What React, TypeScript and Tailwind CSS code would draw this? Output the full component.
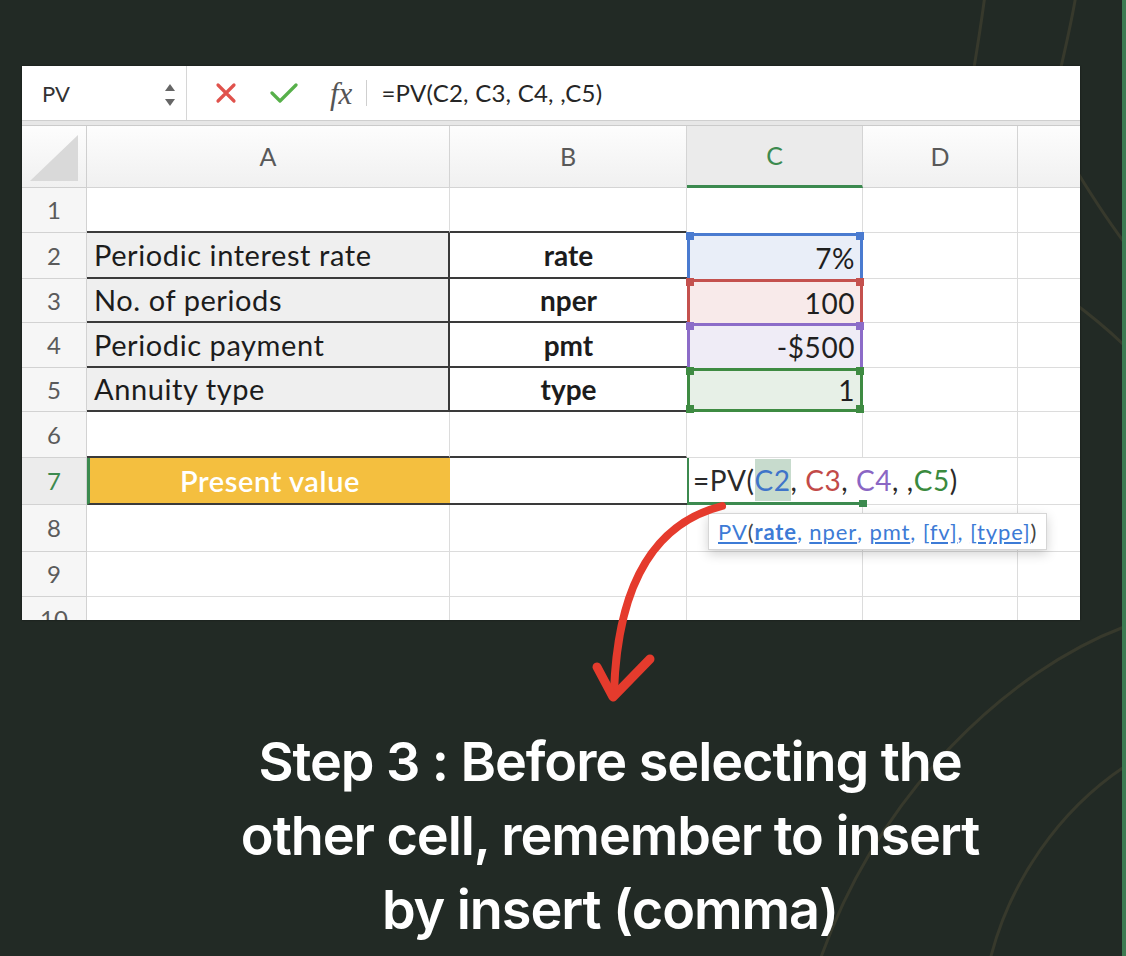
import React from "react";

const GRID = "border-r border-b border-[#dcdcdc]";

function RowHead({ n, active }: { n: string; active?: boolean }) {
  return (
    <div
      className={`w-[65px] shrink-0 h-full flex items-center justify-center text-[24px] border-r border-b border-[#d2d2d2] ${
        active ? "bg-[#ececec] text-[#3c8a4f]" : "bg-[#f6f6f6] text-[#5b5b5b]"
      }`}
    >
      {n}
    </div>
  );
}

function RefCell({
  value,
  cls,
  sq,
  last,
}: {
  value: string;
  cls: string;
  sq: string;
  last?: boolean;
}) {
  return (
    <div
      className={`relative w-[176px] shrink-0 h-full flex items-center justify-end pr-[5px] text-[28px] tracking-[0.02em] text-[#1f1f1f] border-x-[3px] border-t-[3px] ${
        last ? "border-b-[3px]" : ""
      } ${cls}`}
    >
      <span>{value}</span>
      <span className={`absolute -left-[4px] -top-[4px] w-[8px] h-[8px] ${sq}`} />
      <span className={`absolute -right-[4px] -top-[4px] w-[8px] h-[8px] ${sq}`} />
      {last && (
        <>
          <span className={`absolute -left-[4px] -bottom-[4px] w-[8px] h-[8px] ${sq}`} />
          <span className={`absolute -right-[4px] -bottom-[4px] w-[8px] h-[8px] ${sq}`} />
        </>
      )}
    </div>
  );
}

function TailCells() {
  return (
    <>
      <div className={`w-[155px] shrink-0 h-full ${GRID}`} />
      <div className="w-[62px] shrink-0 h-full border-b border-[#dcdcdc]" />
    </>
  );
}

function PlainRow({ n, h }: { n: string; h: string }) {
  return (
    <div className={`flex shrink-0 ${h}`}>
      <RowHead n={n} />
      <div className={`w-[363px] shrink-0 h-full ${GRID}`} />
      <div className={`w-[237px] shrink-0 h-full ${GRID}`} />
      <div className={`w-[176px] shrink-0 h-full ${GRID}`} />
      <TailCells />
    </div>
  );
}

function DataRow({
  n,
  h,
  label,
  name,
  value,
  cls,
  sq,
  last,
}: {
  n: string;
  h: string;
  label: string;
  name: string;
  value: string;
  cls: string;
  sq: string;
  last?: boolean;
}) {
  return (
    <div className={`flex shrink-0 ${h}`}>
      <RowHead n={n} />
      <div className="w-[363px] shrink-0 h-full bg-[#efefef] border-b-2 border-b-[#3a3a3a] border-r-2 border-r-[#3a3a3a] flex items-center pl-[7px] text-[29px] tracking-[0.02em] text-[#1c1c1c]">
        {label}
      </div>
      <div className="w-[237px] shrink-0 h-full bg-white border-b-2 border-b-[#3a3a3a] flex items-center justify-center text-[28px] font-bold text-[#1c1c1c]">
        {name}
      </div>
      <RefCell value={value} cls={cls} sq={sq} last={last} />
      <TailCells />
    </div>
  );
}

function Sheet() {
  return (
    <div className="relative w-[1058px] h-[554px] bg-white overflow-hidden flex flex-col shadow-[0_0_2px_rgba(0,0,0,0.4)]">
      {/* formula bar */}
      <div className="h-[55px] shrink-0 flex items-center border-b border-[#cfcfcf] bg-white">
        <div className="relative w-[165px] h-full flex items-center pl-[20px] border-r border-[#d6d6d6] text-[22px] text-[#333]">
          PV
          <svg className="absolute right-[10px] top-[16px]" width="12" height="26" viewBox="0 0 12 26">
            <path d="M6 2 L11 9 L1 9 Z" fill="#666" />
            <path d="M6 24 L11 17 L1 17 Z" fill="#666" />
          </svg>
        </div>
        <svg className="ml-[28px]" width="22" height="22" viewBox="0 0 22 22">
          <path d="M3 3 L19 19 M19 3 L3 19" stroke="#e0524c" strokeWidth="3.2" strokeLinecap="round" />
        </svg>
        <svg className="ml-[33px]" width="28" height="22" viewBox="0 0 28 22">
          <path d="M2 11 L10 19 L26 3" stroke="#57b04a" strokeWidth="3.2" strokeLinecap="round" strokeLinejoin="round" fill="none" />
        </svg>
        <span className="ml-[32px] font-[family-name:'Liberation_Serif',serif] italic text-[31px] text-[#555] leading-none">
          fx
        </span>
        <div className="ml-[14px] w-px h-[26px] bg-[#cfcfcf]" />
        <span className="ml-[14px] text-[24px] text-[#262626] tracking-[0.01em]">=PV(C2, C3, C4, ,C5)</span>
      </div>
      <div className="h-[5px] shrink-0 bg-[#e7e7e7] border-b border-[#cbcbcb]" />
      {/* header */}
      <div className="h-[62px] shrink-0 flex bg-linear-to-b from-[#fdfdfd] to-[#f0f0f0] text-[25px] text-[#595959]">
        <div className="w-[65px] shrink-0 h-full border-r border-b border-[#cfcfcf] flex items-end justify-end pr-[6px] pb-[4px]">
          <svg width="52" height="50" viewBox="0 0 52 50">
            <path d="M2 48 L50 48 L50 2 Z" fill="#d9d9d9" />
          </svg>
        </div>
        <div className="w-[363px] shrink-0 h-full flex items-center justify-center border-r border-b border-[#d4d4d4]">A</div>
        <div className="w-[237px] shrink-0 h-full flex items-center justify-center border-r border-b border-[#d4d4d4]">B</div>
        <div className="w-[176px] shrink-0 h-full flex items-center justify-center bg-[#ebebeb] text-[#3c8a4f] border-r border-[#d4d4d4] border-b-[3px] border-b-[#3c8a4f]">
          C
        </div>
        <div className="w-[155px] shrink-0 h-full flex items-center justify-center border-r border-b border-[#d4d4d4]">D</div>
        <div className="w-[62px] shrink-0 h-full border-b border-[#d4d4d4]" />
      </div>
      {/* row 1 */}
      <div className="flex shrink-0 h-[45px]">
        <RowHead n="1" />
        <div className="w-[363px] shrink-0 h-full border-r border-[#dcdcdc] border-b-2 border-b-[#3a3a3a]" />
        <div className="w-[237px] shrink-0 h-full border-r border-[#dcdcdc] border-b-2 border-b-[#3a3a3a]" />
        <div className="w-[176px] shrink-0 h-full border-r border-[#dcdcdc]" />
        <TailCells />
      </div>
      <DataRow n="2" h="h-[46px]" label="Periodic interest rate" name="rate" value="7%" cls="border-[#4a7bd0] bg-[#e9eef8]" sq="bg-[#4a7bd0]" />
      <DataRow n="3" h="h-[44px]" label="No. of periods" name="nper" value="100" cls="border-[#c4514e] bg-[#f8eaea]" sq="bg-[#c4514e]" />
      <DataRow n="4" h="h-[45px]" label="Periodic payment" name="pmt" value="-$500" cls="border-[#8c6cc8] bg-[#efecf6]" sq="bg-[#8c6cc8]" />
      <DataRow n="5" h="h-[44px]" label="Annuity type" name="type" value="1" cls="border-[#3e8b42] bg-[#e7f0e7]" sq="bg-[#3e8b42]" last />
      {/* row 6 */}
      <div className="flex shrink-0 h-[46px]">
        <RowHead n="6" />
        <div className="w-[363px] shrink-0 h-full border-r border-[#dcdcdc] border-b-2 border-b-[#3a3a3a]" />
        <div className="w-[237px] shrink-0 h-full border-r border-[#dcdcdc] border-b-2 border-b-[#3a3a3a]" />
        <div className={`w-[176px] shrink-0 h-full ${GRID}`} />
        <TailCells />
      </div>
      {/* row 7 */}
      <div className="flex shrink-0 h-[47px]">
        <RowHead n="7" active />
        <div className="w-[363px] shrink-0 h-full bg-[#f4bf3f] border-l-[3px] border-l-[#3c8a4f] border-b-2 border-b-[#3a3a3a] flex items-center justify-center text-[29px] tracking-[0.02em] font-semibold text-white">
          Present value
        </div>
        <div className="w-[237px] shrink-0 h-full bg-white border-b-2 border-b-[#3a3a3a]" />
        <div className="relative z-10 w-[176px] shrink-0 h-full border-l-2 border-l-[#3c8a4f] border-b-[3px] border-b-[#3c8a4f] flex items-center pl-[4px] whitespace-nowrap text-[28px] text-[#2a2a2a] tracking-[0.02em]">
          <span>=PV(</span>
          <span className="bg-[#c7dbcd] text-[#3f74c9] h-[42px] flex items-center">C2</span>
          <span>,&nbsp;</span>
          <span className="text-[#c24a48]">C3</span>
          <span>,&nbsp;</span>
          <span className="text-[#8a66c4]">C4</span>
          <span>, ,</span>
          <span className="text-[#3a8a3e]">C5</span>
          <span>)</span>
          <span className="absolute -right-[4px] -bottom-[5px] w-[8px] h-[7px] bg-[#3c8a4f]" />
        </div>
        <TailCells />
      </div>
      <PlainRow n="8" h="h-[47px]" />
      <PlainRow n="9" h="h-[45px]" />
      <PlainRow n="10" h="h-[45px]" />
      {/* tooltip */}
      <div className="absolute z-20 left-[686px] top-[447px] h-[37px] px-[9px] flex items-center bg-white border border-[#d6d6d6] shadow-[0_4px_12px_rgba(0,0,0,0.18)] text-[22px] tracking-[0.04em] text-[#444] whitespace-nowrap">
        <span className="text-[#3d7bd6] underline">PV</span>
        <span>(</span>
        <span className="text-[#3d7bd6] underline font-bold">rate</span>
        <span className="text-[#3d7bd6]">,&nbsp;</span>
        <span className="text-[#3d7bd6] underline">nper</span>
        <span className="text-[#3d7bd6]">,&nbsp;</span>
        <span className="text-[#3d7bd6] underline">pmt</span>
        <span className="text-[#3d7bd6]">,&nbsp;</span>
        <span className="text-[#3d7bd6] underline">[fv]</span>
        <span className="text-[#3d7bd6]">,&nbsp;</span>
        <span className="text-[#3d7bd6] underline">[type]</span>
        <span>)</span>
      </div>
    </div>
  );
}

export default function App() {
  return (
    <div className="relative w-[1126px] h-[956px] overflow-hidden bg-[#222a25] font-[family-name:Lato,sans-serif]">
      <svg className="absolute inset-0" width="1126" height="956" fill="none" stroke="#37392c" strokeWidth="3">
        <path d="M985 -5 C 981 25, 977 50, 972 80" />
        <path d="M1076 -5 C 1071 25, 1065 50, 1058 80" />
        <path d="M1070 160 Q 1100 210 1124 242" />
        <path d="M1070 300 Q 1100 322 1124 345" />
        <path d="M1124 627 C 1010 670, 880 790, 820 960" />
        <path d="M1124 767 C 1060 810, 1010 880, 990 960" />
      </svg>
      <div className="relative z-10 pt-[66px] pl-[22px]">
        <Sheet />
      </div>
      <div className="relative z-10 mt-[105px] pl-[94px] text-center text-white font-[family-name:Inter,sans-serif] font-semibold text-[54px] leading-[74px] tracking-[-0.02em]">
        Step 3 : Before selecting the
        <br />
        other cell, remember to insert
        <br />
        by insert (comma)
      </div>
      <svg className="absolute inset-0 z-30 pointer-events-none" width="1126" height="956" fill="none">
        <path d="M722 506 C 660 522, 618 575, 614 692" stroke="#e53b2d" strokeWidth="8" strokeLinecap="round" />
        <path d="M597 667 L 613 697 L 650 659" stroke="#e53b2d" strokeWidth="9" strokeLinecap="round" strokeLinejoin="round" />
      </svg>
      <div className="absolute right-0 top-0 w-[4px] h-full bg-[#3d7b52]" />
    </div>
  );
}
